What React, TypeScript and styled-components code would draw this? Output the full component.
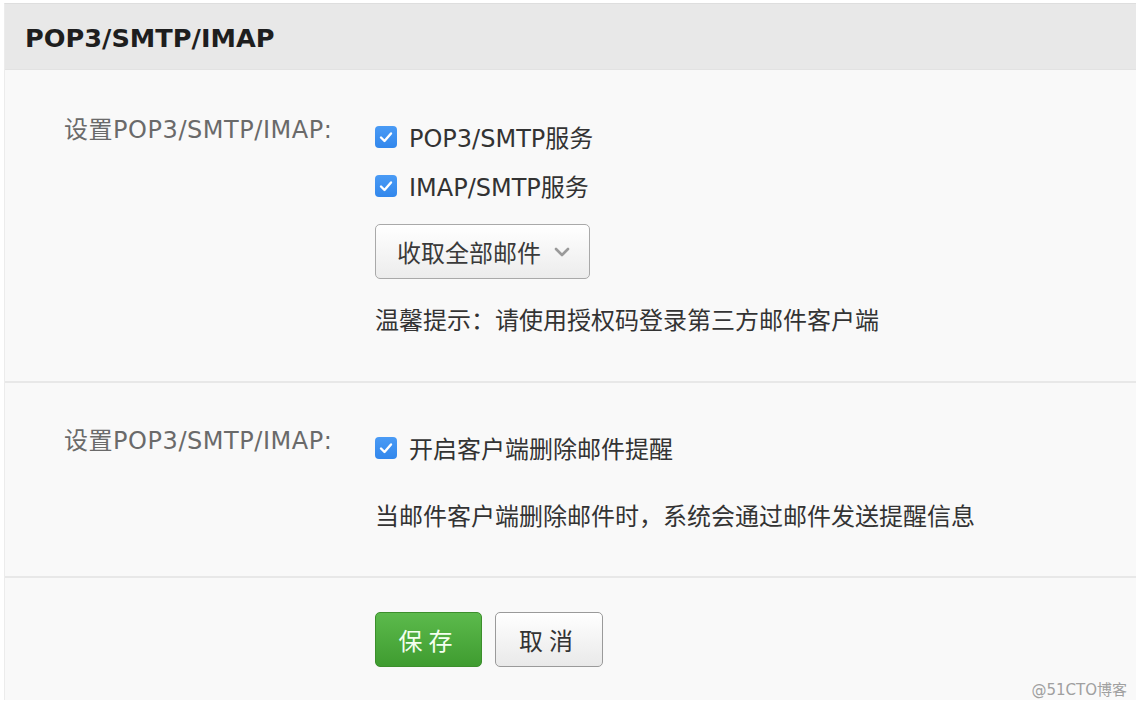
import React from "react";
import styled, { createGlobalStyle } from "styled-components";

const Global = createGlobalStyle`
  html, body { margin: 0; padding: 0; background: #ffffff; }
  body { font-family: "DejaVu Sans", "Noto Sans CJK SC", sans-serif; overflow: hidden; }
`;

const Page = styled.div`
  width: 1136px;
  height: 706px;
  padding: 3px 0 0 4px;
  box-sizing: border-box;
  position: relative;
  overflow: hidden;
`;

const Panel = styled.div`
  width: 1140px;
  height: 697px;
  background: #f9f9f9;
  border-top: 1px solid #dedede;
  border-left: 1px solid #ececec;
  box-sizing: border-box;
  display: flex;
  flex-direction: column;
`;

const Header = styled.div`
  height: 66px;
  background: #e8e8e8;
  border-bottom: 1px solid #e2e2e2;
  display: flex;
  align-items: center;
  padding-left: 20px;
  box-sizing: border-box;
`;

const Title = styled.h1`
  margin: 0;
  font-family: "DejaVu Sans", "Noto Sans CJK SC", sans-serif;
  font-weight: bold;
  font-size: 25.6px;
  color: #1e1e1e;
  padding-top: 2px;
`;

const Section = styled.div<{ $top: number; $bottom: number }>`
  display: grid;
  grid-template-columns: 311px 1fr;
  padding: ${(p) => p.$top}px 0 ${(p) => p.$bottom}px 59px;
  border-bottom: 2px solid #e8e8e8;
`;

const Label = styled.div`
  font-family: "DejaVu Sans", "Noto Sans CJK SC", sans-serif;
  font-size: 24px;
  letter-spacing: 0.55px;
  line-height: 39px;
  margin-top: -1px;
  color: #6a6a6a;
`;

const Controls = styled.div`
  display: flex;
  flex-direction: column;
  align-items: flex-start;
`;

const CheckRow = styled.label`
  display: flex;
  align-items: center;
  height: 49px;
  gap: 12px;
  font-family: "DejaVu Sans", "Noto Sans CJK SC", sans-serif;
  font-size: 24px;
  color: #333;
`;

const Box = styled.span`
  width: 22px;
  height: 22px;
  border-radius: 4px;
  background: linear-gradient(#4a9bf5, #3287ec);
  display: flex;
  align-items: center;
  justify-content: center;
  flex-shrink: 0;
`;

const Select = styled.button`
  margin-top: 14px;
  width: 215px;
  height: 55px;
  border: 1.5px solid #a9a9a9;
  border-radius: 5px;
  background: linear-gradient(#ffffff, #ececec);
  display: flex;
  align-items: center;
  padding: 0 0 0 21px;
  gap: 13px;
  font-family: "Noto Sans CJK SC", sans-serif;
  font-size: 24px;
  color: #3a3a3a;
  box-sizing: border-box;
`;

const Hint = styled.div<{ $mt: number }>`
  margin-top: ${(p) => p.$mt}px;
  line-height: 40px;
  font-family: "Noto Sans CJK SC", sans-serif;
  font-size: 24px;
  color: #333;
`;

const Footer = styled.div`
  display: flex;
  gap: 13px;
  padding: 34px 0 0 370px;
`;

const Button = styled.button<{ $primary?: boolean }>`
  width: ${(p) => (p.$primary ? 107 : 108)}px;
  height: 55px;
  border-radius: 5px;
  box-sizing: border-box;
  font-family: "Noto Sans CJK SC", sans-serif;
  font-size: 24px;
  letter-spacing: 6px;
  padding-left: 6px;
  border: 1.5px solid ${(p) => (p.$primary ? "#3c8f2c" : "#9a9a9a")};
  background: ${(p) =>
    p.$primary ? "linear-gradient(#5cba4c, #3f9c30)" : "linear-gradient(#ffffff, #e9e9e9)"};
  color: ${(p) => (p.$primary ? "#f4fff0" : "#333")};
`;

const Watermark = styled.div`
  position: absolute;
  right: 9px;
  bottom: 7px;
  font-family: "DejaVu Sans", "Noto Sans CJK SC", sans-serif;
  font-size: 15px;
  color: #a0a0a0;
`;

const Check = () => (
  <Box>
    <svg width="14" height="12" viewBox="0 0 14 12">
      <path d="M2 6.5 L5.5 10 L12 2.5" fill="none" stroke="#fff" strokeWidth="2.4" strokeLinecap="round" strokeLinejoin="round" />
    </svg>
  </Box>
);

const Chevron = () => (
  <svg width="16" height="10" viewBox="0 0 16 10">
    <path d="M2 2 L8 8 L14 2" fill="none" stroke="#9a9a9a" strokeWidth="2.6" strokeLinecap="round" strokeLinejoin="round" />
  </svg>
);

export default function App() {
  return (
    <>
      <Global />
      <Page>
        <Panel>
          <Header>
            <Title>POP3/SMTP/IMAP</Title>
          </Header>
          <Section $top={42} $bottom={42}>
            <Label>设置POP3/SMTP/IMAP:</Label>
            <Controls>
              <CheckRow>
                <Check />
                POP3/SMTP服务
              </CheckRow>
              <CheckRow>
                <Check />
                IMAP/SMTP服务
              </CheckRow>
              <Select>
                收取全部邮件
                <Chevron />
              </Select>
              <Hint $mt={20}>温馨提示：请使用授权码登录第三方邮件客户端</Hint>
            </Controls>
          </Section>
          <Section $top={40} $bottom={41}>
            <Label>设置POP3/SMTP/IMAP:</Label>
            <Controls>
              <CheckRow>
                <Check />
                开启客户端删除邮件提醒
              </CheckRow>
              <Hint $mt={23}>当邮件客户端删除邮件时，系统会通过邮件发送提醒信息</Hint>
            </Controls>
          </Section>
          <Footer>
            <Button $primary>保存</Button>
            <Button>取消</Button>
          </Footer>
        </Panel>
        <Watermark>@51CTO博客</Watermark>
      </Page>
    </>
  );
}
